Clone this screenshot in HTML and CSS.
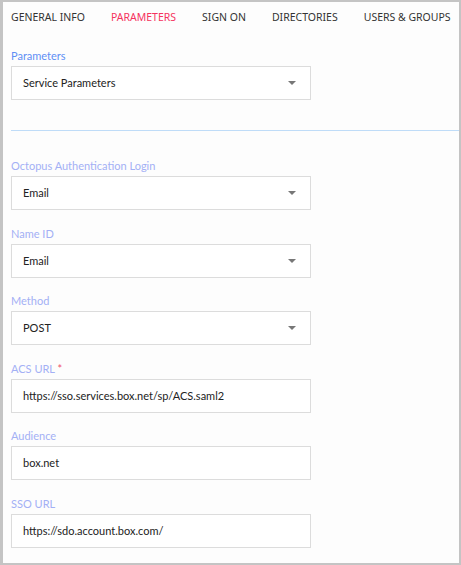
FILE: index.html
```html
<!DOCTYPE html>
<html lang="en">
<head>
    <meta charset="UTF-8">
    <meta name="viewport" content="width=device-width, initial-scale=1.0">
    <title>Application Settings</title>
    <link rel="stylesheet" href="styles.css">
</head>
<body>
    <div class="panel">
        <nav class="tabs">
            <span class="tab">GENERAL INFO</span>
            <span class="tab active">PARAMETERS</span>
            <span class="tab">SIGN ON</span>
            <span class="tab">DIRECTORIES</span>
            <span class="tab">USERS &amp; GROUPS</span>
        </nav>

        <div class="content">
            <div class="field">
                <label class="field-label primary">Parameters</label>
                <div class="select">Service Parameters<span class="caret"></span></div>
            </div>

            <hr class="divider">

            <div class="field">
                <label class="field-label">Octopus Authentication Login</label>
                <div class="select">Email<span class="caret"></span></div>
            </div>

            <div class="field">
                <label class="field-label">Name ID</label>
                <div class="select">Email<span class="caret"></span></div>
            </div>

            <div class="field">
                <label class="field-label">Method</label>
                <div class="select">POST<span class="caret"></span></div>
            </div>

            <div class="field">
                <label class="field-label">ACS URL <span class="required">*</span></label>
                <div class="input">https://sso.services.box.net/sp/ACS.saml2</div>
            </div>

            <div class="field">
                <label class="field-label">Audience</label>
                <div class="input">box.net</div>
            </div>

            <div class="field">
                <label class="field-label">SSO URL</label>
                <div class="input">https://sdo.account.box.com/</div>
            </div>
        </div>
    </div>
</body>
</html>
```

FILE: styles.css
```css
* {
    box-sizing: border-box;
    font-family: Lato, 'Noto Sans', sans-serif;
}

body {
    margin: 0;
    background: #fff;
}

.panel {
    width: 461px;
    height: 565px;
    border: 2px solid #c4c4c4;
    border-left-width: 3px;
    background-color: #fdfdfd;
    overflow: hidden;
}

.tabs {
    display: flex;
    gap: 26px;
    height: 30px;
    padding-left: 8px;
    align-items: center;
    white-space: nowrap;
}

.tab {
    font-family: 'Noto Sans', sans-serif;
    font-size: 10.5px;
    color: #333;
}

.tab.active {
    color: #f5335e;
}

.content {
    padding: 16px 0 0 8px;
}

.field {
    margin-bottom: 15.5px;
}

.field-label {
    display: block;
    height: 16px;
    line-height: 16px;
    margin-bottom: 2px;
    font-size: 11px;
    color: #a3b0f5;
}

.field-label.primary {
    color: #5f8ff5;
}

.required {
    color: #f0506e;
}

.select,
.input {
    position: relative;
    width: 300px;
    height: 34px;
    line-height: 32px;
    padding-left: 11px;
    border: 1px solid #dcdcdc;
    background-color: #fff;
    font-size: 11px;
    color: #222;
}

.caret {
    position: absolute;
    right: 14px;
    top: 14px;
    width: 0;
    height: 0;
    border-left: 4px solid transparent;
    border-right: 4px solid transparent;
    border-top: 4px solid #777;
}

.divider {
    margin: 30px 0 27px;
    border: none;
    border-top: 1px solid #bfdcf8;
}
```
